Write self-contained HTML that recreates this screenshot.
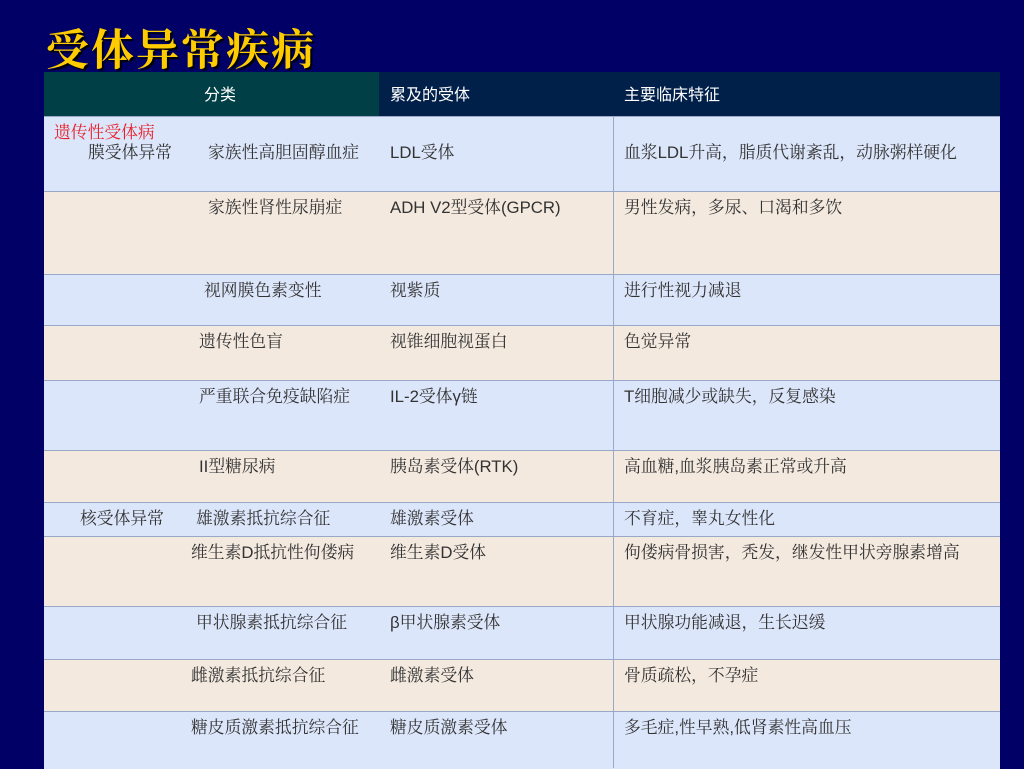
<!DOCTYPE html>
<html><head><meta charset="utf-8"><style>
body{margin:0;width:1024px;height:768px;background:#000066;overflow:hidden;position:relative;font-family:"Liberation Sans","Noto Serif CJK SC",serif;}
.title{position:absolute;left:46px;top:20px;font-family:"Noto Serif CJK SC","WenQuanYi Zen Hei",serif;font-weight:bold;font-size:43px;color:#ffcc00;text-shadow:2px 2px 1px #000;letter-spacing:2px;line-height:56px}
.r{position:absolute;left:44px;width:956px;border-top:1px solid #9aa8c8}
.b{background:#dce6fa}.e{background:#f3e9df}
.t{position:absolute;font-size:16.8px;color:#333;white-space:nowrap;line-height:20px}
.h{color:#fff;font-family:"Liberation Sans","Noto Sans CJK SC",sans-serif;font-size:16px}
.v{position:absolute;left:613px;top:116px;width:1px;height:652px;background:#9aa8c8}
</style></head><body>
<div class="title">受体异常疾病</div>
<div style="position:absolute;left:44px;top:72px;width:335px;height:44px;background:#003f45"></div>
<div style="position:absolute;left:379px;top:72px;width:621px;height:44px;background:#00204a"></div>
<div class="t h" style="left:204px;top:86px">分类</div>
<div class="t h" style="left:390px;top:86px">累及的受体</div>
<div class="t h" style="left:624px;top:86px">主要临床特征</div>
<div class="r b" style="top:116px;height:75px"></div>
<div class="r e" style="top:191px;height:83px"></div>
<div class="r b" style="top:274px;height:51px"></div>
<div class="r e" style="top:325px;height:55px"></div>
<div class="r b" style="top:380px;height:70px"></div>
<div class="r e" style="top:450px;height:52px"></div>
<div class="r b" style="top:502px;height:34px"></div>
<div class="r e" style="top:536px;height:70px"></div>
<div class="r b" style="top:606px;height:53px"></div>
<div class="r e" style="top:659px;height:52px"></div>
<div class="r b" style="top:711px;height:57px"></div>
<div class="v"></div>
<div class="t" style="left:54px;top:123px;color:#e8202a">遗传性受体病</div>
<div class="t" style="left:88px;top:143px">膜受体异常</div>
<div class="t" style="left:208px;top:143px">家族性高胆固醇血症</div>
<div class="t" style="left:390px;top:143px">LDL受体</div>
<div class="t" style="left:624px;top:143px">血浆LDL升高，脂质代谢紊乱，动脉粥样硬化</div>
<div class="t" style="left:208px;top:198px">家族性肾性尿崩症</div>
<div class="t" style="left:390px;top:198px">ADH V2型受体(GPCR)</div>
<div class="t" style="left:624px;top:198px">男性发病，多尿、口渴和多饮</div>
<div class="t" style="left:204px;top:281px">视网膜色素变性</div>
<div class="t" style="left:390px;top:281px">视紫质</div>
<div class="t" style="left:624px;top:281px">进行性视力减退</div>
<div class="t" style="left:199px;top:332px">遗传性色盲</div>
<div class="t" style="left:390px;top:332px">视锥细胞视蛋白</div>
<div class="t" style="left:624px;top:332px">色觉异常</div>
<div class="t" style="left:199px;top:387px">严重联合免疫缺陷症</div>
<div class="t" style="left:390px;top:387px">IL-2受体γ链</div>
<div class="t" style="left:624px;top:387px">T细胞减少或缺失，反复感染</div>
<div class="t" style="left:199px;top:457px">II型糖尿病</div>
<div class="t" style="left:390px;top:457px">胰岛素受体(RTK)</div>
<div class="t" style="left:624px;top:457px">高血糖,血浆胰岛素正常或升高</div>
<div class="t" style="left:80px;top:509px">核受体异常</div>
<div class="t" style="left:196px;top:509px">雄激素抵抗综合征</div>
<div class="t" style="left:390px;top:509px">雄激素受体</div>
<div class="t" style="left:624px;top:509px">不育症，睾丸女性化</div>
<div class="t" style="left:191px;top:543px">维生素D抵抗性佝偻病</div>
<div class="t" style="left:390px;top:543px">维生素D受体</div>
<div class="t" style="left:624px;top:543px">佝偻病骨损害，秃发，继发性甲状旁腺素增高</div>
<div class="t" style="left:196px;top:613px">甲状腺素抵抗综合征</div>
<div class="t" style="left:390px;top:613px">β甲状腺素受体</div>
<div class="t" style="left:624px;top:613px">甲状腺功能减退，生长迟缓</div>
<div class="t" style="left:191px;top:666px">雌激素抵抗综合征</div>
<div class="t" style="left:390px;top:666px">雌激素受体</div>
<div class="t" style="left:624px;top:666px">骨质疏松，不孕症</div>
<div class="t" style="left:191px;top:718px">糖皮质激素抵抗综合征</div>
<div class="t" style="left:390px;top:718px">糖皮质激素受体</div>
<div class="t" style="left:624px;top:718px">多毛症,性早熟,低肾素性高血压</div>
</body></html>
